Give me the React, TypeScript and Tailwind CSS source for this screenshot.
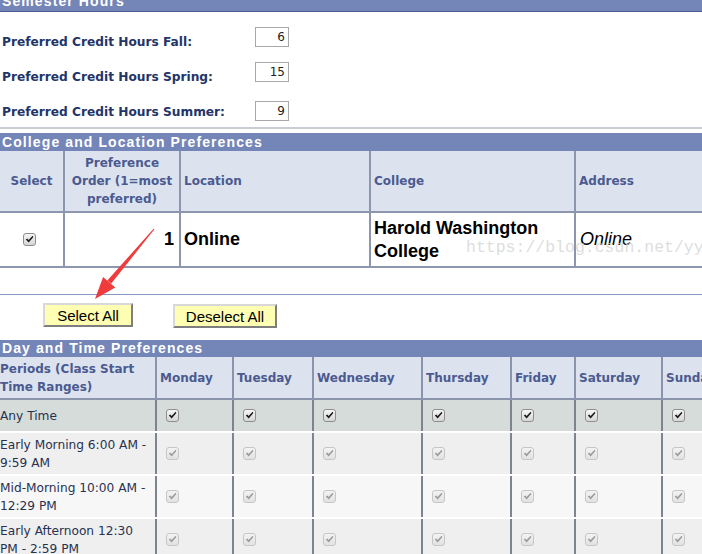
import React from "react";

const periods = [
  { label: "Any Time", any: true },
  { label: "Early Morning 6:00 AM - 9:59 AM", any: false },
  { label: "Mid-Morning 10:00 AM - 12:29 PM", any: false },
  { label: "Early Afternoon 12:30 PM - 2:59 PM", any: false },
];

const days = ["Monday", "Tuesday", "Wednesday", "Thursday", "Friday", "Saturday", "Sunday"];

const rowBg = ["bg-[#d6dcd9]", "bg-[#efefef]", "bg-[#f7f7f7]", "bg-[#efefef]"];
const rowH = ["h-[33px]", "h-[43px]", "h-[43px]", "h-[43px]"];

const Check = ({ dim }: { dim?: boolean }) => (
  <span
    className={
      dim
        ? "flex h-[13px] w-[13px] items-center justify-center rounded-[3px] border border-[#c6c6c6] bg-gradient-to-b from-[#f3f3f3] to-[#e2e2e2]"
        : "flex h-[13px] w-[13px] items-center justify-center rounded-[3px] border border-[#8e8e8e] bg-gradient-to-b from-[#f6f6f6] to-[#d6d6d6]"
    }
  >
    <svg width="9" height="9" viewBox="0 0 9 9">
      <path d="M0.8 4.6 L2.3 3.4 L3.6 5 L7.6 0.8 L8.4 1.9 L3.7 7.6 Z" fill={dim ? "#9c9c9c" : "#1c1c1c"} />
    </svg>
  </span>
);

const SemesterRow = ({ label, value, inputTop, h }: { label: string; value: string; inputTop: string; h: string }) => (
  <div className={`flex ${h}`}>
    <div className="mt-[23px] w-[255px] pl-[2px] text-[12.2px] font-bold leading-[14px] text-[#233468]">{label}</div>
    <div className={`${inputTop} flex h-[20px] w-[34px] items-center justify-end border border-[#a8a8a8] pr-[3px] text-[12px] text-[#222]`}>
      {value}
    </div>
  </div>
);

const Bar = ({ title, cls }: { title: string; cls: string }) => (
  <div
    className={`${cls} flex items-center bg-[#7485b7] px-[2px] font-['Liberation_Sans',Arial,sans-serif] text-[14px] font-bold tracking-[1.1px] text-white`}
  >
    {title}
  </div>
);

export default function App() {
  return (
    <div className="relative h-[554px] w-[702px] overflow-hidden bg-white font-['DejaVu_Sans',Verdana,sans-serif]">
      {/* Semester Hours */}
      <Bar title="Semester Hours" cls="-mt-[8px] h-[20px] border-b border-[#4b5b93]" />
      <SemesterRow label="Preferred Credit Hours Fall:" value="6" inputTop="mt-[15px]" h="h-[35px]" />
      <SemesterRow label="Preferred Credit Hours Spring:" value="15" inputTop="mt-[15px]" h="h-[35px]" />
      <SemesterRow label="Preferred Credit Hours Summer:" value="9" inputTop="mt-[19px]" h="h-[45px]" />
      <div className="h-[2px] bg-[#c9cdd8]" />

      {/* College and Location Preferences */}
      <Bar title="College and Location Preferences" cls="mt-[4px] h-[18px]" />
      <div className="grid h-[62px] grid-cols-[65px_116px_190px_205px_1fr] border-b-2 border-[#8c96af] bg-[#dce3ee] text-[12px] font-bold text-[#4b5a90]">
        <div className="flex items-center justify-center border-r-2 border-[#8c96af]">Select</div>
        <div className="flex items-center justify-center border-r-2 border-[#8c96af] text-center leading-[18px]">
          Preference Order (1=most preferred)
        </div>
        <div className="flex items-center border-r-2 border-[#8c96af] pl-[3px]">Location</div>
        <div className="flex items-center border-r-2 border-[#8c96af] pl-[3px]">College</div>
        <div className="flex items-center pl-[3px]">Address</div>
      </div>
      <div className="grid h-[55px] grid-cols-[65px_116px_190px_205px_1fr] border-b-2 border-[#8c96af] font-['Liberation_Sans',Arial,sans-serif] text-[18px] text-black">
        <div className="flex items-center justify-center border-r-2 border-[#8c96af] pr-[4px]">
          <Check />
        </div>
        <div className="flex items-center justify-end border-r-2 border-[#8c96af] pr-[5px] font-bold">1</div>
        <div className="flex items-center border-r-2 border-[#8c96af] pl-[3px] font-bold">Online</div>
        <div className="flex items-center border-r-2 border-[#8c96af] pl-[3px] font-bold leading-[23px]">
          Harold Washington College
        </div>
        <div className="flex items-center pl-[4px] italic">Online</div>
      </div>
      <div className="mt-[26px] h-px bg-[#8797c3]" />

      {/* Buttons */}
      <div className="mt-[8px] flex h-[25px] items-start font-['Liberation_Sans',Arial,sans-serif] text-[15px] text-black">
        <button className="ml-[43px] h-[24px] w-[90px] border-2 border-t-[#d8d8d8] border-l-[#d8d8d8] border-r-[#7e7e7e] border-b-[#7e7e7e] bg-[#ffffb4] leading-none">
          Select All
        </button>
        <button className="ml-[40px] mt-[1px] h-[24px] w-[104px] border-2 border-t-[#d8d8d8] border-l-[#d8d8d8] border-r-[#7e7e7e] border-b-[#7e7e7e] bg-[#ffffb4] leading-none">
          Deselect All
        </button>
      </div>

      {/* Day and Time Preferences */}
      <Bar title="Day and Time Preferences" cls="mt-[12px] h-[17px]" />
      <div className="grid h-[43px] grid-cols-[157px_77px_80px_109px_89px_64px_87px_1fr] border-b-2 border-[#8a94ad] bg-[#dce3ee] text-[12px] font-bold text-[#4b5a90]">
        <div className="flex items-center border-r-2 border-[#8a94ad] leading-[18px]">Periods (Class Start Time Ranges)</div>
        {days.map((d, i) => (
          <div
            key={d}
            className={`flex items-center pl-[3px] ${i < days.length - 1 ? "border-r-2 border-[#8a94ad]" : ""}`}
          >
            {d}
          </div>
        ))}
      </div>
      {periods.map((p, r) => (
        <div
          key={p.label}
          className={`grid ${rowH[r]} grid-cols-[157px_77px_80px_109px_89px_64px_87px_1fr] border-b-2 border-white ${rowBg[r]} text-[12.2px] text-[#283150]`}
        >
          <div className="flex items-center border-r-2 border-[#7e8391] pr-[4px] leading-[18px]">{p.label}</div>
          {days.map((d, i) => (
            <div
              key={d}
              className={`flex items-center pl-[9px] ${i < days.length - 1 ? "border-r-2 border-[#7e8391]" : ""}`}
            >
              <Check dim={!p.any} />
            </div>
          ))}
        </div>
      ))}

      {/* watermark */}
      <div className="pointer-events-none absolute left-[466px] top-[236px] font-['Liberation_Mono',monospace] text-[16.5px] text-[#d2d2d2]/75">
        https://blog.csdn.net/yy
      </div>

      {/* red arrow */}
      <svg className="pointer-events-none absolute left-0 top-0" width="702" height="554">
        <polygon points="154.4,229.3 153.6,228.7 107.3,280.6 111.1,283.8" fill="#ef3b3b" />
        <polygon points="95,299 103.1,277 115.3,287.4" fill="#ef3b3b" />
      </svg>
    </div>
  );
}
